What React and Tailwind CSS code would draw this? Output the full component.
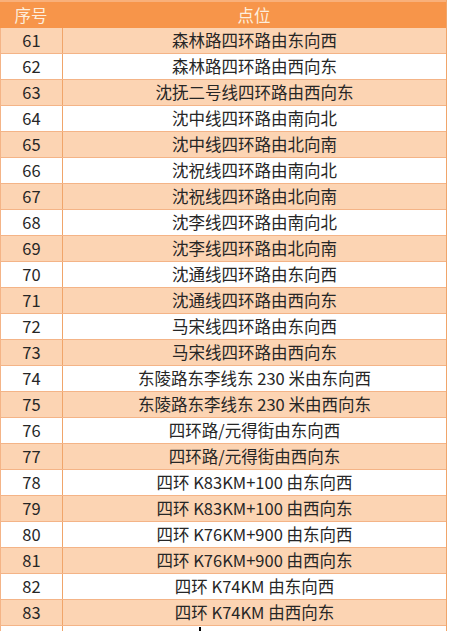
import React from "react";

const rows = [
  ["61", "森林路四环路由东向西"],
  ["62", "森林路四环路由西向东"],
  ["63", "沈抚二号线四环路由西向东"],
  ["64", "沈中线四环路由南向北"],
  ["65", "沈中线四环路由北向南"],
  ["66", "沈祝线四环路由南向北"],
  ["67", "沈祝线四环路由北向南"],
  ["68", "沈李线四环路由南向北"],
  ["69", "沈李线四环路由北向南"],
  ["70", "沈通线四环路由东向西"],
  ["71", "沈通线四环路由西向东"],
  ["72", "马宋线四环路由东向西"],
  ["73", "马宋线四环路由西向东"],
  ["74", "东陵路东李线东 230 米由东向西"],
  ["75", "东陵路东李线东 230 米由西向东"],
  ["76", "四环路/元得街由东向西"],
  ["77", "四环路/元得街由西向东"],
  ["78", "四环 K83KM+100 由东向西"],
  ["79", "四环 K83KM+100 由西向东"],
  ["80", "四环 K76KM+900 由东向西"],
  ["81", "四环 K76KM+900 由西向东"],
  ["82", "四环 K74KM 由东向西"],
  ["83", "四环 K74KM 由西向东"],
];

export default function App() {
  return (
    <div
      className="w-[450px] h-[631px] overflow-hidden bg-white text-[#262626]"
      style={{ fontFamily: '"Noto Sans CJK SC", "Noto Sans", sans-serif' }}
    >
      <div className="w-[447px] border-r border-[#f0a56a]">
        <div className="flex h-[28px] bg-[#f7954a] border-t-2 border-[#f9b07a] text-[#fdeedd] text-[16.5px] leading-none">
          <div className="w-[62px] flex items-center justify-center">序号</div>
          <div className="flex-1 flex items-center justify-center">点位</div>
        </div>
        {rows.map(([n, t], i) => (
          <div
            key={n}
            className={
              "flex h-[26px] border-b border-l border-[#f4b487] text-[16.5px] leading-none " +
              (i % 2 === 0 ? "bg-[#fcd4b3]" : "bg-white")
            }
          >
            <div className="w-[62px] flex items-center justify-center border-r border-[#f0a56a]">{n}</div>
            <div className="flex-1 flex items-center justify-center whitespace-pre">{t}</div>
          </div>
        ))}
        <div className="flex h-[26px] border-l border-[#f4b487] bg-white">
          <div className="w-[62px] border-r border-[#f0a56a]"></div>
          <div className="flex-1 pl-[136px] pt-[1px]">
            <div className="w-[2px] h-[4px] bg-black"></div>
          </div>
        </div>
      </div>
    </div>
  );
}
